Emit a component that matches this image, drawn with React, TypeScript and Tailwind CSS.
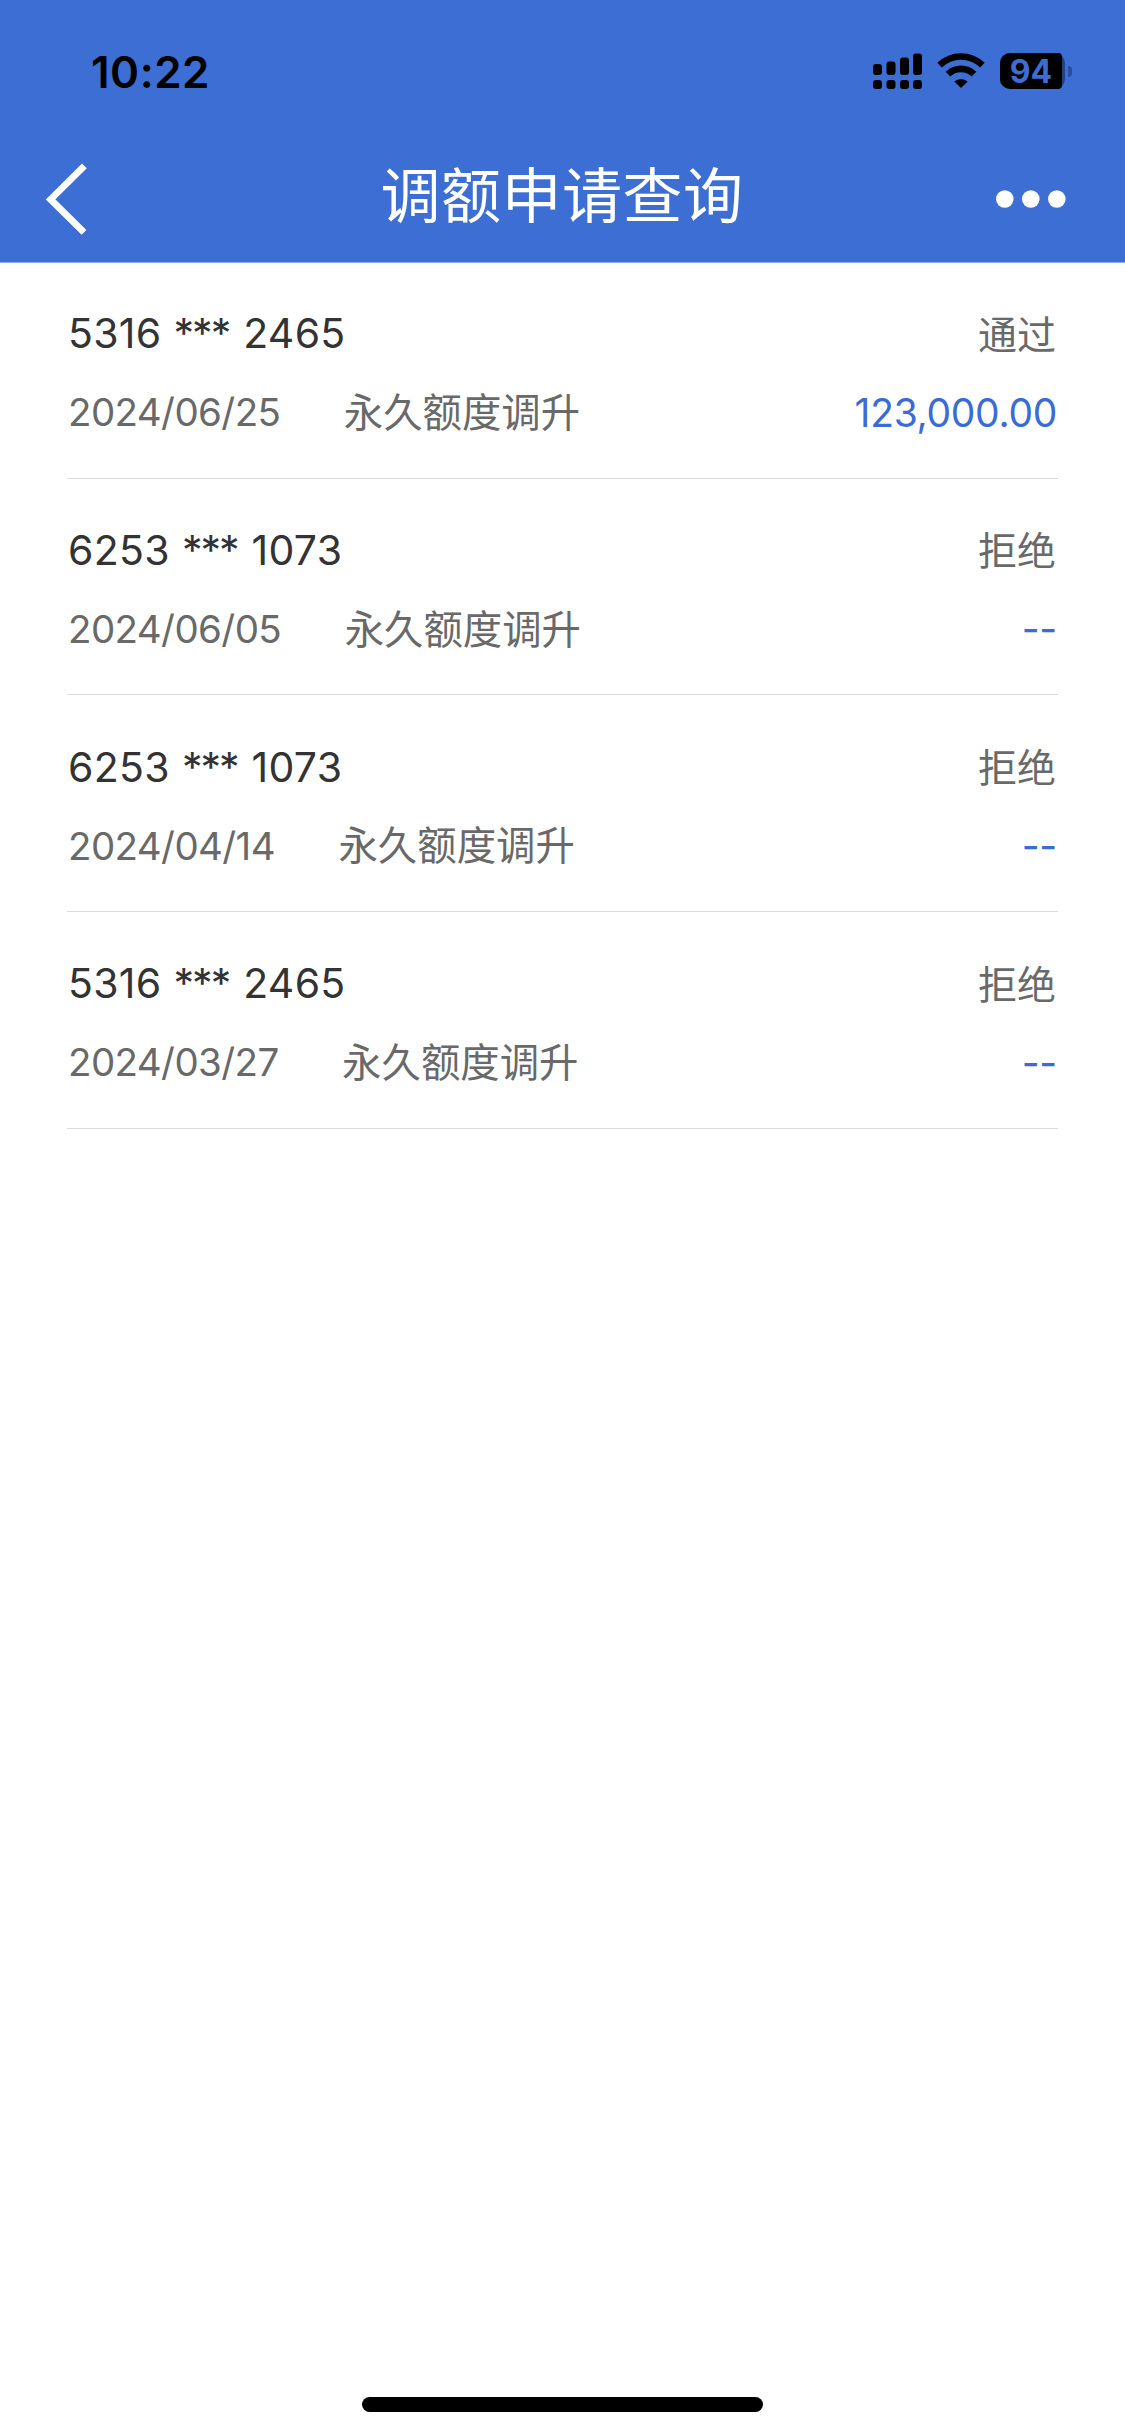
import React from 'react';

interface ApplyRecord {
  card: string;
  date: string;
  type: string;
  status: string;
  amount: string;
}

const records: ApplyRecord[] = [
  { card: '5316 *** 2465', date: '2024/06/25', type: '永久额度调升', status: '通过', amount: '123,000.00' },
  { card: '6253 *** 1073', date: '2024/06/05', type: '永久额度调升', status: '拒绝', amount: '--' },
  { card: '6253 *** 1073', date: '2024/04/14', type: '永久额度调升', status: '拒绝', amount: '--' },
  { card: '5316 *** 2465', date: '2024/03/27', type: '永久额度调升', status: '拒绝', amount: '--' },
];

function SignalIcon() {
  return (
    <svg width="49" height="36" viewBox="0 0 49 36">
      <rect x="0" y="11" width="9" height="11" rx="3" />
      <rect x="13.5" y="8.5" width="9" height="13.5" rx="3" />
      <rect x="27" y="4.5" width="9" height="17.5" rx="3" />
      <rect x="40" y="0.5" width="9" height="21.5" rx="3" />
      <rect x="0" y="27" width="9" height="9" rx="3" />
      <rect x="13.5" y="27" width="9" height="9" rx="3" />
      <rect x="27" y="27" width="9" height="9" rx="3" />
      <rect x="40" y="27" width="9" height="9" rx="3" />
    </svg>
  );
}

function WifiIcon() {
  return (
    <svg width="48" height="36" viewBox="0 0 48 36" fill="none" stroke="#000" strokeWidth="6.6">
      <path d="M2.6 12.2a30.6 30.6 0 0 1 42.8 0" />
      <path d="M11 21.2a18.6 18.6 0 0 1 26 0" />
      <path d="M24 35l-6.7-6.4a9.6 9.6 0 0 1 13.4 0z" fill="#000" stroke="none" />
    </svg>
  );
}

function Battery({ level }: { level: number }) {
  return (
    <div className="flex items-center gap-[3px]">
      <div className="h-9 w-[65px] rounded-[10px] bg-[#234081]">
        <div className="h-9 w-[62px] rounded-l-[10px] rounded-r-[4px] bg-black text-center text-[32px] leading-[38px] font-bold text-[#3c6ed4]">
          {level}
        </div>
      </div>
      <div className="h-[11px] w-1 rounded-r-full bg-[#29509f]" />
    </div>
  );
}

function StatusBar() {
  return (
    <div className="flex h-[142px] justify-between pr-[53px] pl-[91px]">
      <span className="pt-[45px] text-[44px] leading-[54px] font-semibold tracking-[0.5px] text-black">10:22</span>
      <div className="mt-[53px] flex h-9 items-center gap-[15px]">
        <SignalIcon />
        <WifiIcon />
        <Battery level={94} />
      </div>
    </div>
  );
}

function NavBar() {
  return (
    <div className="flex h-[120px] items-center pr-[59px] pl-[45px]">
      <button className="w-[134px]">
        <svg className="mt-[-6px]" width="44" height="72" viewBox="0 0 44 72" fill="none" stroke="#fff" strokeWidth="6.8">
          <path d="M39.4 2.8L5.6 36.4l33.4 33" />
        </svg>
      </button>
      <h1 className="mt-[-12px] flex-1 pl-[7px] text-center text-[60px] leading-[84px] tracking-[0.5px] text-white">
        调额申请查询
      </h1>
      <button className="mt-[-6px] flex w-[128px] justify-end">
        <svg width="70" height="18" viewBox="0 0 70 18" fill="#fff">
          <circle cx="8.8" cy="9" r="8.8" />
          <circle cx="34.8" cy="9" r="8.8" />
          <circle cx="60.8" cy="9" r="8.8" />
        </svg>
      </button>
    </div>
  );
}

function CardNumber({ value }: { value: string }) {
  const [head, mask, tail] = value.split(' ');
  return (
    <div className="flex text-[41px] tracking-[0.3px] text-[#333]">
      <span>{head}</span>
      <span className="ml-[12px] tracking-[-2px]">{mask}</span>
      <span className="ml-[14px]">{tail}</span>
    </div>
  );
}

function RecordItem({ item }: { item: ApplyRecord }) {
  return (
    <li className="flex h-[216.7px] flex-col border-b border-[#dcdcdc] px-[1px] pt-[41px]">
      <div className="flex h-[62px] items-center justify-between">
        <CardNumber value={item.card} />
        <span className="pt-[2px] pr-[1px] text-[39px] text-[#696969]">{item.status}</span>
      </div>
      <div className="mt-[17px] flex h-[62px] items-center">
        <span className="text-[38.5px] tracking-[-0.6px] text-[#696969]">{item.date}</span>
        <span className="ml-[63.5px] pt-[1px] text-[39.4px] text-[#696969]">{item.type}</span>
        <span className="ml-auto text-[39px] tracking-[-0.3px] text-[#3a6bd6]">{item.amount}</span>
      </div>
    </li>
  );
}

export default function App() {
  return (
    <div className="flex h-[2435px] w-[1125px] flex-col bg-white font-[Inter,'Noto_Sans_CJK_SC',sans-serif]">
      <header className="border-b border-[#8fabe5] bg-[#3c6ed4]">
        <StatusBar />
        <NavBar />
      </header>
      <ul className="mt-[-1px] flex-1 px-[67px]">
        {records.map((item, index) => (
          <RecordItem key={index} item={item} />
        ))}
      </ul>
      <div className="mb-[23px] h-[15px] w-[401px] self-center rounded-full bg-black" />
    </div>
  );
}
